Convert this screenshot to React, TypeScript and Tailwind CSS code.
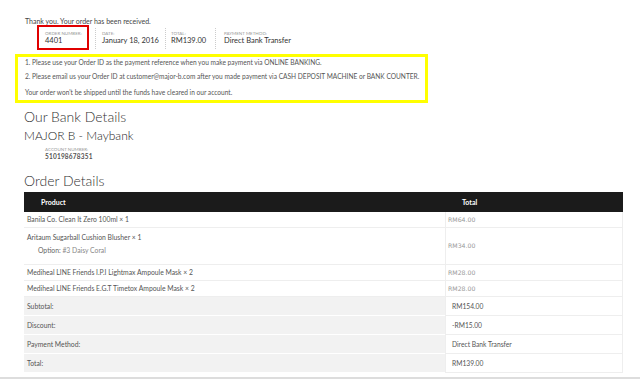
import { FC } from 'react';

interface Item {
  name: string;
  option?: string;
  price: string;
}

const items: Item[] = [
  { name: 'Banila Co. Clean It Zero 100ml × 1', price: 'RM64.00' },
  { name: 'Aritaum Sugarball Cushion Blusher × 1', option: '#3 Daisy Coral', price: 'RM34.00' },
  { name: 'Mediheal LINE Friends I.P.I Lightmax Ampoule Mask × 2', price: 'RM28.00' },
  { name: 'Mediheal LINE Friends E.G.T Timetox Ampoule Mask × 2', price: 'RM28.00' },
];

const totals = [
  { label: 'Subtotal:', value: 'RM154.00' },
  { label: 'Discount:', value: '-RM15.00' },
  { label: 'Payment Method:', value: 'Direct Bank Transfer' },
  { label: 'Total:', value: 'RM139.00' },
];

const App: FC = () => {
  return (
    <div className="w-[640px] h-[379px] overflow-hidden bg-white text-[#555] font-['Lato','Liberation_Sans',sans-serif]">
      <p className="pt-[17px] ml-[25px] text-[7px] leading-[9px] text-[#444]">Thank you. Your order has been received.</p>

      {/* order meta */}
      <div className="flex items-start ml-[37px] h-[25px] -mt-[1px]">
        <div className="w-[52px] h-[25px] border-2 border-[#e00000] pl-[6px]">
          <div className="mt-[4px] text-[4.5px] leading-[6px] uppercase text-[#999]">Order Number:</div>
          <div className="text-[7.5px] leading-[8px] text-[#333]">4401</div>
        </div>
        <div className="ml-[6px] w-[70px] h-[21px] mt-[3px] border-l border-dotted border-[#ccc] pl-[6px]">
          <div className="mt-[3px] text-[4.5px] leading-[6px] uppercase text-[#999]">Date:</div>
          <div className="text-[7.5px] leading-[8px] text-[#333]">January 18, 2016</div>
        </div>
        <div className="w-[50px] h-[21px] mt-[3px] border-l border-dotted border-[#ccc] pl-[5px]">
          <div className="mt-[3px] text-[4.5px] leading-[6px] uppercase text-[#999]">Total:</div>
          <div className="text-[7.5px] leading-[8px] text-[#333]">RM139.00</div>
        </div>
        <div className="h-[21px] mt-[3px] border-l border-dotted border-[#ccc] pl-[8px]">
          <div className="mt-[3px] text-[4.5px] leading-[6px] uppercase text-[#999]">Payment Method:</div>
          <div className="text-[7.5px] leading-[8px] text-[#333]">Direct Bank Transfer</div>
        </div>
      </div>

      {/* notice */}
      <div className="mt-[4px] ml-[15px] w-[413px] border-[3px] border-[#ffff00] pl-[7px] pb-[3px] text-[6.6px] leading-[10px] text-[#555]">
        <p>1. Please use your Order ID as the payment reference when you make payment via ONLINE BANKING.</p>
        <p className="mt-[4px]">2. Please email us your Order ID at customer@major-b.com after you made payment via CASH DEPOSIT MACHINE or BANK COUNTER.</p>
        <p className="mt-[6px]">Your order won't be shipped until the funds have cleared in our account.</p>
      </div>

      <h2 className="mt-[6px] ml-[24px] text-[14px] leading-[16px] font-light text-[#333]">Our Bank Details</h2>
      <h3 className="mt-[4px] ml-[24px] text-[12px] leading-[14px] font-light text-[#222]">MAJOR B - Maybank</h3>
      <div className="mt-[4px] ml-[45px] text-[4.5px] leading-[6px] uppercase text-[#999]">Account Number:</div>
      <div className="ml-[45px] text-[6.5px] leading-[7px] font-bold text-[#555] tracking-[0.2px]">510198678351</div>

      <h2 className="mt-[13px] ml-[24px] text-[14px] leading-[16px] font-light text-[#333]">Order Details</h2>

      {/* table */}
      <div className="mt-[3px] ml-[24px] w-[599px]">
        <div className="grid grid-cols-[421px_178px] h-[20px] bg-[#1b1b1b] text-white text-[7px] font-bold">
          <div className="pl-[17px] flex items-center">Product</div>
          <div className="pl-[17px] flex items-center">Total</div>
        </div>
        <div className="border-r border-[#eee]">
          {items.map((item, i) => (
            <div
              key={i}
              className={`grid grid-cols-[421px_177px] border-b border-[#eee] ${item.option ? 'h-[37px]' : 'h-[16px]'}`}
            >
              {item.option ? (
                <div className="pl-[3px] pt-[4px] text-[6.8px] leading-[10px]">
                  <div>{item.name}</div>
                  <div className="ml-[11px] mt-[3px] text-[#666]">
                    Option: <span className="text-[#888]">{item.option}</span>
                  </div>
                </div>
              ) : (
                <div className="pl-[3px] flex items-center text-[6.8px]">{item.name}</div>
              )}
              <div className="border-l border-[#eee] pl-[2px] flex items-center text-[6.2px] text-[#999] font-['DejaVu_Sans',sans-serif]">
                {item.price}
              </div>
            </div>
          ))}
          {totals.map((row, i) => (
            <div key={i} className="grid grid-cols-[421px_177px] h-[19px]">
              <div className="bg-[#f2f2f2] border-b border-white pl-[3px] flex items-center text-[6.8px] text-[#555]">
                {row.label}
              </div>
              <div className="border-l border-b border-[#eee] pl-[6px] flex items-center text-[6.7px] text-[#555]">
                {row.value}
              </div>
            </div>
          ))}
        </div>
      </div>

      <div className="mt-[4px] h-[2px] bg-[#ddd]" />
    </div>
  );
};

export default App;
